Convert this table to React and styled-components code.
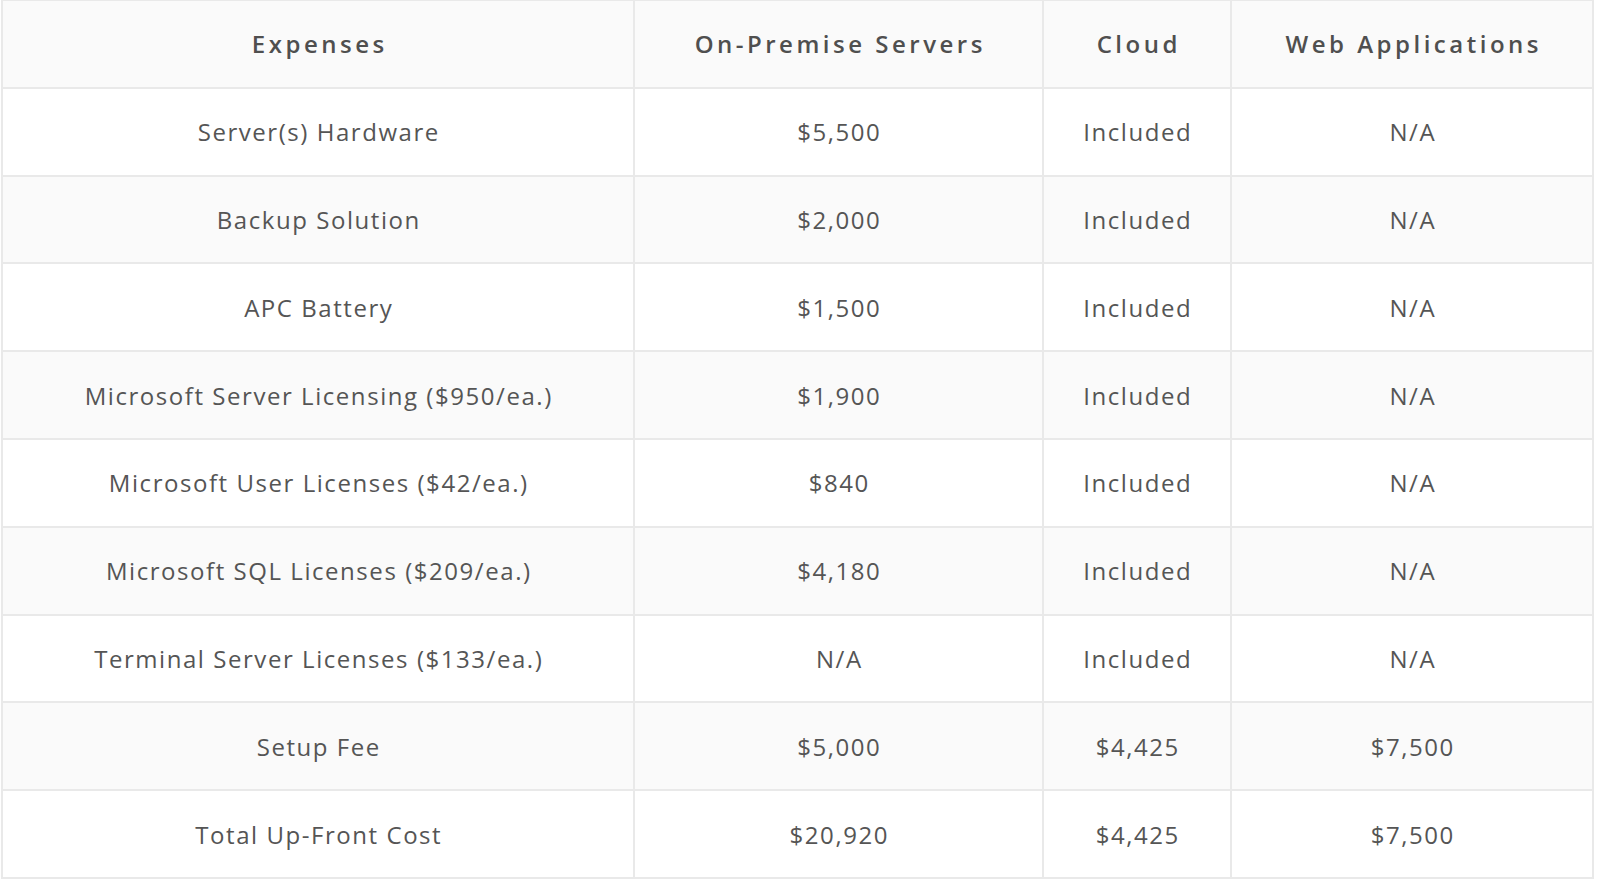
import React from "react";
import styled, { createGlobalStyle } from "styled-components";

const Global = createGlobalStyle`
  html, body { margin: 0; padding: 0; background: #ffffff; }
  body { font-family: "Open Sans", "Liberation Sans", sans-serif; overflow: hidden; }
`;

const Page = styled.div`
  padding-left: 1px;
  margin-top: -1px;
`;

const Grid = styled.div`
  display: grid;
  width: 1593px;
  box-sizing: border-box;
  grid-template-columns: 630px 407px 186px 360px;
  grid-auto-rows: 85.8px;
  gap: 2px;
  padding: 2px;
  background: #e9e9e9;
`;

const Cell = styled.div`
  display: flex;
  align-items: center;
  justify-content: center;
  text-align: center;
  background: ${(p) => (p.$shade ? "#fafafa" : "#ffffff")};
  color: ${(p) => (p.$head ? "#4f4f4f" : "#555555")};
  font-size: 24px;
  font-weight: ${(p) => (p.$head ? 600 : 400)};
  letter-spacing: ${(p) => (p.$head ? "3.5px" : "1.55px")};
  padding-left: ${(p) => (p.$head ? "3.5px" : "1.55px")};
  white-space: nowrap;
`;

const headers = ["Expenses", "On-Premise Servers", "Cloud", "Web Applications"];

const rows = [
  ["Server(s) Hardware", "$5,500", "Included", "N/A"],
  ["Backup Solution", "$2,000", "Included", "N/A"],
  ["APC Battery", "$1,500", "Included", "N/A"],
  ["Microsoft Server Licensing ($950/ea.)", "$1,900", "Included", "N/A"],
  ["Microsoft User Licenses ($42/ea.)", "$840", "Included", "N/A"],
  ["Microsoft SQL Licenses ($209/ea.)", "$4,180", "Included", "N/A"],
  ["Terminal Server Licenses ($133/ea.)", "N/A", "Included", "N/A"],
  ["Setup Fee", "$5,000", "$4,425", "$7,500"],
  ["Total Up-Front Cost", "$20,920", "$4,425", "$7,500"],
];

export default function App() {
  return (
    <Page>
      <Global />
      <Grid>
        {headers.map((h) => (
          <Cell key={h} $head $shade>
            {h}
          </Cell>
        ))}
        {rows.map((r, i) =>
          r.map((c, j) => (
            <Cell key={i + "-" + j} $shade={i % 2 === 1}>
              {c}
            </Cell>
          ))
        )}
      </Grid>
    </Page>
  );
}
